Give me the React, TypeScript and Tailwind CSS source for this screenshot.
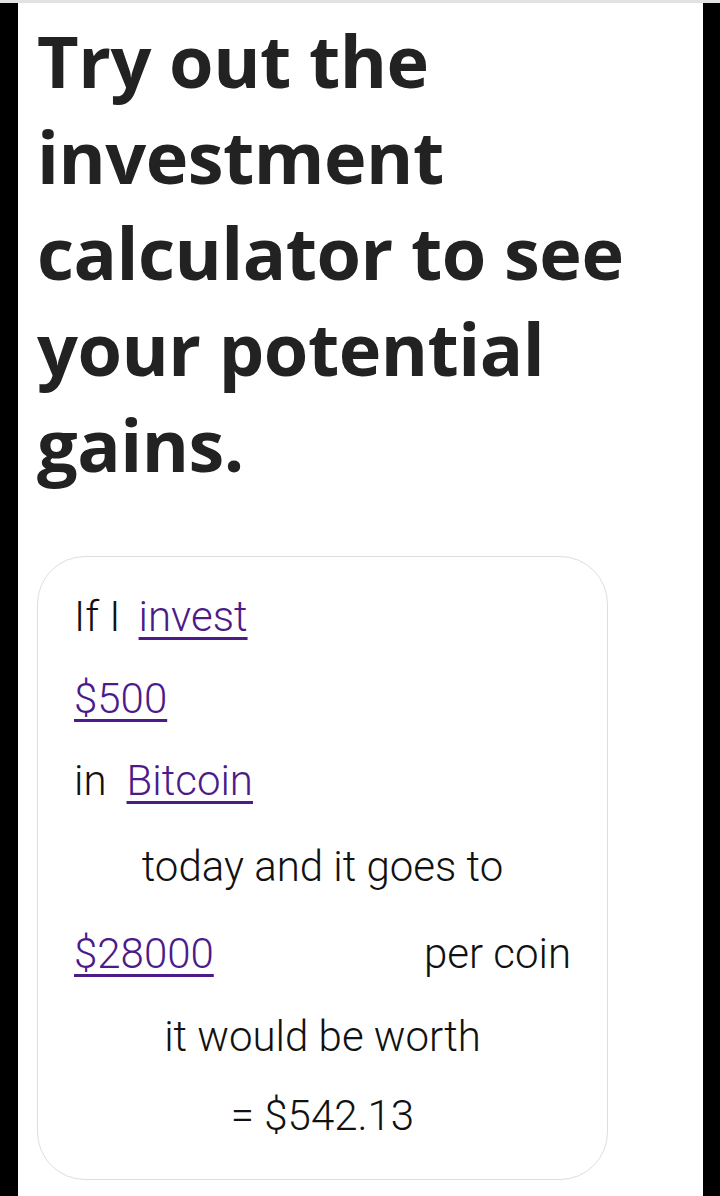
const App = () => {
  return (
    <div className="min-h-[1196px] bg-white flex flex-col">
      <div className="h-[3px] bg-[#e2e2e2]" />
      <div className="flex flex-1">
        <div className="w-[18px] bg-black" />
        <div className="flex-1 bg-white pl-[19px] pr-[30px]">
          <h1 className="pt-[9px] font-['Open_Sans',sans-serif] font-bold text-[72px] leading-[96px] tracking-[-0.5px] text-[#222222]">
            Try out the investment calculator to see your potential gains.
          </h1>
          <div className="mt-[64px] w-[571px] rounded-[48px] border border-[#dedede] px-[36px] pt-[18px] pb-[26px] font-['Roboto',sans-serif] font-light text-[42px] text-[#111111]">
            <div className="flex h-[82px] items-center gap-[18px]">
              <span>If I</span>
              <a href="#" className="text-[#4d1a8a] underline decoration-[3px] underline-offset-[6px]">
                invest
              </a>
            </div>
            <div className="flex h-[82px] items-center">
              <a href="#" className="text-[#4d1a8a] underline decoration-[3px] underline-offset-[6px]">
                $500
              </a>
            </div>
            <div className="flex h-[82px] items-center gap-[20px]">
              <span>in</span>
              <a href="#" className="text-[#4d1a8a] underline decoration-[3px] underline-offset-[6px]">
                Bitcoin
              </a>
            </div>
            <div className="flex h-[90px] items-center justify-center">today and it goes to</div>
            <div className="flex h-[84px] items-center justify-between">
              <a href="#" className="text-[#4d1a8a] underline decoration-[3px] underline-offset-[6px]">
                $28000
              </a>
              <span>per coin</span>
            </div>
            <div className="flex h-[82px] items-center justify-center">it would be worth</div>
            <div className="flex h-[76px] items-center justify-center">= $542.13</div>
          </div>
        </div>
        <div className="w-[17px] bg-black" />
      </div>
    </div>
  );
};

export default App;
